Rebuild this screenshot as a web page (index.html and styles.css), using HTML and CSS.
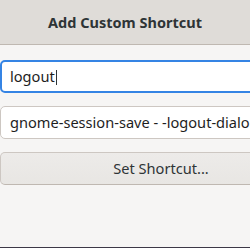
FILE: index.html
```html
<!DOCTYPE html>
<html lang="en">

<head>
    <meta charset="UTF-8">
    <meta name="viewport" content="width=device-width, initial-scale=1.0">
    <title>Add Custom Shortcut</title>
    <link rel="stylesheet" href="styles.css">
</head>

<body>
    <div class="dialog">
        <div class="header">
            <span class="title">Add Custom Shortcut</span>
        </div>
        <div class="content">
            <div class="entry focus">logout<span class="caret"></span></div>
            <div class="entry">gnome-session-save - -logout-dialog</div>
            <div class="button">Set Shortcut...</div>
        </div>
        <div class="footer"></div>
    </div>
</body>

</html>
```
FILE: styles.css
```css
* {
    padding: 0;
    margin: 0;
    box-sizing: border-box;
}

body {
    width: 250px;
    height: 248px;
    overflow: hidden;
    background-color: #f6f5f4;
    font-family: "Noto Sans", "DejaVu Sans", sans-serif;
    color: #2e3436;
}

.dialog {
    display: flex;
    flex-direction: column;
    height: 248px;
}

.header {
    height: 45px;
    background-color: #dfdcd8;
    border-bottom: 1px solid #bfb8b1;
    display: flex;
    align-items: center;
    justify-content: center;
}

.title {
    font-weight: bold;
    font-size: 14.5px;
    padding-bottom: 1px;
}

.content {
    flex: 1;
    width: 322px;
    padding-top: 15px;
    display: flex;
    flex-direction: column;
    gap: 13px;
}

.entry {
    height: 33px;
    background-color: #ffffff;
    border: 1px solid #cdc7c2;
    border-radius: 5px;
    padding-left: 9px;
    font-size: 14.6px;
    line-height: 31px;
    white-space: nowrap;
    overflow: hidden;
    color: #1e1e1e;
}

.entry.focus {
    border: 2px solid #3584e4;
    padding-left: 8px;
    line-height: 29px;
}

.caret {
    display: inline-block;
    width: 1px;
    height: 15px;
    margin-left: 1px;
    background-color: #2e3436;
    vertical-align: -3px;
}

.button {
    height: 33px;
    background: linear-gradient(#edebe9, #e8e6e3);
    border: 1px solid #cdc7c2;
    border-bottom-color: #bfb8b1;
    border-radius: 5px;
    font-size: 14.6px;
    line-height: 31px;
    text-align: center;
}

.footer {
    height: 1px;
    background-color: #3d3846;
}
```
